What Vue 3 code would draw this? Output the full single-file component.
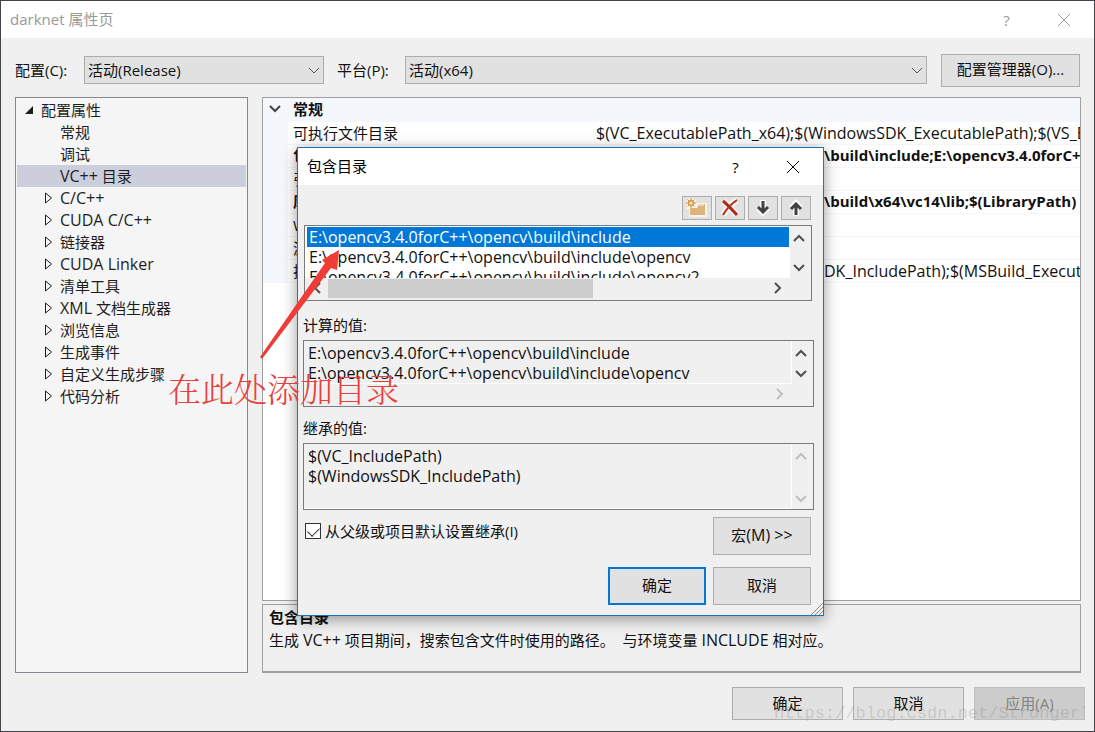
<script setup>
import { ref } from 'vue'

const configuration = ref('release')
const platform = ref('x64')
const inherit = ref(true)

const treeItems = [
  { label: '常规' },
  { label: '调试' },
  { latin: 'VC++', label: ' 目录', selected: true },
  { latin: 'C/C++', branch: true },
  { latin: 'CUDA C/C++', branch: true },
  { label: '链接器', branch: true },
  { latin: 'CUDA Linker', branch: true },
  { label: '清单工具', branch: true },
  { latin: 'XML', label: ' 文档生成器', branch: true },
  { label: '浏览信息', branch: true },
  { label: '生成事件', branch: true },
  { label: '自定义生成步骤', branch: true },
  { label: '代码分析', branch: true },
]

const properties = [
  { name: '可执行文件目录', value: '$(VC_ExecutablePath_x64);$(WindowsSDK_ExecutablePath);$(VS_ExecutablePath)' },
  { name: '包含目录', root: 'E:\\opencv3.4.0forC++\\opencv', value: '\\build\\include;E:\\opencv3.4.0forC++', bold: true },
  { name: '引用目录', value: '' },
  { name: '库目录', root: 'E:\\opencv3.4.0forC++\\opencv', value: '\\build\\x64\\vc14\\lib;$(LibraryPath)', bold: true },
  { name: 'WinRT 库目录', value: '' },
  { name: '源目录', value: '' },
  { name: '排除目录', root: '$(VC_IncludePath);$(WindowsS', value: 'DK_IncludePath);$(MSBuild_ExecutablePath)' },
]

const directories = [
  'E:\\opencv3.4.0forC++\\opencv\\build\\include',
  'E:\\opencv3.4.0forC++\\opencv\\build\\include\\opencv',
  'E:\\opencv3.4.0forC++\\opencv\\build\\include\\opencv2',
]
const evaluated = directories.slice(0, 2)
const inherited = ['$(VC_IncludePath)', '$(WindowsSDK_IncludePath)']
</script>

<template>
  <div class="window">
    <header class="titlebar">
      <span class="title">darknet 属性页</span>
      <button class="caption" aria-label="帮助">?</button>
      <button class="caption" aria-label="关闭">
        <svg width="14" height="14" viewBox="0 0 14 14"><path d="M1 1L13 13M13 1L1 13" /></svg>
      </button>
    </header>

    <div class="config">
      <label class="config-label" for="cfg">配置(C):</label>
      <span class="picker picker-cfg">
        <select id="cfg" v-model="configuration"><option value="release">活动(Release)</option></select>
        <svg class="drop" width="12" height="8" viewBox="0 0 12 8"><path d="M1 1L6 6L11 1" /></svg>
      </span>
      <label class="config-label platform" for="plat">平台(P):</label>
      <span class="picker picker-plat">
        <select id="plat" v-model="platform"><option value="x64">活动(x64)</option></select>
        <svg class="drop" width="12" height="8" viewBox="0 0 12 8"><path d="M1 1L6 6L11 1" /></svg>
      </span>
      <button class="push manager">配置管理器(O)...</button>
    </div>

    <main class="body">
      <nav class="tree">
        <div class="node root">
          <svg width="10" height="10" viewBox="0 0 10 10"><path class="solid" d="M9 1V9H1Z" /></svg>
          <span>配置属性</span>
        </div>
        <div v-for="(item, i) in treeItems" :key="i" class="node" :class="{ selected: item.selected }">
          <span class="twist">
            <svg v-if="item.branch" width="9" height="12" viewBox="0 0 9 12"><path class="hollow" d="M1.500 1L7.500 6L1.500 11Z" /></svg>
          </span>
          <span><span v-if="item.latin" class="latin">{{ item.latin }}</span>{{ item.label }}</span>
        </div>
      </nav>

      <section class="details">
        <div class="sheet">
          <div class="category">
            <svg width="12" height="8" viewBox="0 0 12 8"><path d="M1 1L6 6L11 1" /></svg>
            <span>常规</span>
          </div>
          <div v-for="row in properties" :key="row.name" class="prop" :class="{ bold: row.bold }">
            <span class="prop-name">{{ row.name }}</span>
            <span class="prop-value"><span v-if="row.root" class="prop-root">{{ row.root }}</span>{{ row.value }}</span>
          </div>
        </div>
        <div class="description">
          <strong>包含目录</strong>
          <p>生成 <span class="latin">VC++</span> 项目期间，搜索包含文件时使用的路径。&nbsp; 与环境变量 <span class="latin">INCLUDE</span> 相对应。</p>
        </div>
      </section>
    </main>

    <footer class="actions">
      <button class="push">确定</button>
      <button class="push">取消</button>
      <button class="push" disabled>应用(A)</button>
    </footer>

    <section class="dialog" role="dialog" aria-labelledby="dialog-title">
      <header class="dialog-title">
        <span id="dialog-title" class="title">包含目录</span>
        <button class="caption" aria-label="帮助">?</button>
        <button class="caption" aria-label="关闭">
          <svg width="14" height="14" viewBox="0 0 14 14"><path d="M1 1L13 13M13 1L1 13" /></svg>
        </button>
      </header>
      <div class="dialog-body">
        <div class="toolbar">
          <button aria-label="新行">
            <svg width="24" height="22" viewBox="0 0 24 22">
              <path d="M2 2H11V6H22V20H4V12H1Z" fill="#f8f5ee" />
              <path d="M5 11H12L14 7H20V18H5Z" fill="#dfb47a" />
              <path d="M14 8H19" stroke="#fff5df" />
              <circle cx="6" cy="6" r="5" fill="#f8f0df" />
              <path d="M6 1V11M1 6H11M2.500 2.500L9.500 9.500M9.500 2.500L2.500 9.500" stroke="#c98a35" />
              <circle cx="6" cy="6" r="3" fill="#d9963f" />
              <circle cx="6" cy="6" r="1.500" fill="#fff0b8" />
            </svg>
          </button>
          <button aria-label="删除">
            <svg width="24" height="22" viewBox="0 0 24 22">
              <path d="M5 4Q9 7 19 18M19 3Q11 9 5 18" fill="none" stroke="#f8f5f3" stroke-width="6" />
              <path d="M5 4Q9 7 19 18" fill="none" stroke="#a92d18" stroke-width="3" />
              <path d="M19 3Q10 9 5 18" fill="none" stroke="#b92d14" stroke-width="2" />
            </svg>
          </button>
          <button aria-label="下移">
            <svg width="24" height="22" viewBox="0 0 24 22">
              <path d="M12 3V17M7 11L12 16L17 11" fill="none" stroke="#f7f7f7" stroke-width="6" />
              <path d="M12 4V16M7 10L12 15L17 10" fill="none" stroke="#424242" stroke-width="3" />
            </svg>
          </button>
          <button aria-label="上移">
            <svg width="24" height="22" viewBox="0 0 24 22">
              <path d="M12 19V6M7 11L12 6L17 11" fill="none" stroke="#f7f7f7" stroke-width="6" />
              <path d="M12 18V6M7 12L12 7L17 12" fill="none" stroke="#424242" stroke-width="3" />
            </svg>
          </button>
        </div>

        <div class="list editable">
          <ul>
            <li v-for="(dir, i) in directories" :key="dir" :class="{ chosen: i === 0 }">{{ dir }}</li>
          </ul>
          <div class="vbar">
            <svg width="12" height="8" viewBox="0 0 12 8"><path d="M1 7L6 2L11 7" /></svg>
            <svg width="12" height="8" viewBox="0 0 12 8"><path d="M1 1L6 6L11 1" /></svg>
          </div>
          <div class="hbar">
            <svg width="8" height="12" viewBox="0 0 8 12"><path d="M7 1L2 6L7 11" /></svg>
            <span class="track"><span class="thumb"></span></span>
            <svg width="8" height="12" viewBox="0 0 8 12"><path d="M1 1L6 6L1 11" /></svg>
          </div>
        </div>

        <h2>计算的值:</h2>
        <div class="list readonly">
          <ul><li v-for="dir in evaluated" :key="dir">{{ dir }}</li></ul>
          <div class="vbar">
            <svg width="12" height="8" viewBox="0 0 12 8"><path d="M1 7L6 2L11 7" /></svg>
            <svg width="12" height="8" viewBox="0 0 12 8"><path d="M1 1L6 6L11 1" /></svg>
          </div>
          <div class="hbar faint">
            <span class="track"></span>
            <svg width="8" height="12" viewBox="0 0 8 12"><path d="M1 1L6 6L1 11" /></svg>
          </div>
        </div>

        <h2>继承的值:</h2>
        <div class="list readonly tall">
          <ul><li v-for="dir in inherited" :key="dir">{{ dir }}</li></ul>
          <div class="vbar faint">
            <svg width="12" height="8" viewBox="0 0 12 8"><path d="M1 7L6 2L11 7" /></svg>
            <svg width="12" height="8" viewBox="0 0 12 8"><path d="M1 1L6 6L11 1" /></svg>
          </div>
        </div>

        <div class="options">
          <label class="inherit"><input v-model="inherit" type="checkbox" /><span>从父级或项目默认设置继承(I)</span></label>
          <button class="push">宏<span class="latin">(M) &gt;&gt;</span></button>
        </div>
        <div class="confirm">
          <button class="push primary">确定</button>
          <button class="push">取消</button>
        </div>
      </div>
      <svg class="grip" width="12" height="12" viewBox="0 0 12 12"><path d="M0 12L12 0M4 12L12 4M8 12L12 8" /></svg>
    </section>

    <svg class="arrow" width="80" height="110" viewBox="0 0 80 110"><path d="M79 0L62 10L65 13L0 107L2 109L71 18L77 20Z" /></svg>
    <p class="note">在此处添加目录</p>
    <p class="watermark">https://blog.csdn.net/Strongerl</p>
  </div>
</template>

<style>
body {
  background: #f0f0f0;
}
</style>

<style scoped>
* {
  box-sizing: border-box;
}

.window {
  position: relative;
  display: flex;
  flex-direction: column;
  min-height: 100vh;
  overflow: hidden;
  border: 1px solid #454347;
  background: #f0f0f0;
  color: #111;
  font: 15px/22px "Open Sans", "Noto Sans CJK SC", sans-serif;
}

button,
select,
input {
  margin: 0;
  font: inherit;
  color: inherit;
}

svg {
  flex: none;
  display: block;
}

p,
h2,
ul {
  margin: 0;
  padding: 0;
  list-style: none;
}

.latin {
  font-size: 16px;
}

.titlebar,
.dialog-title {
  display: flex;
  align-items: center;
  height: 37px;
  padding: 0 2px 0 9px;
  background: #fff;
}

.titlebar {
  color: #999;
}

.title {
  flex: 1;
  padding-bottom: 2px;
}

.caption {
  display: flex;
  align-items: center;
  justify-content: center;
  width: 57px;
  height: 30px;
  padding: 0;
  border: 0;
  background: none;
}

.caption path {
  fill: none;
  stroke: currentColor;
}

.config {
  display: flex;
  align-items: center;
  height: 59px;
  padding: 5px 14px 0;
}

.config-label {
  width: 69px;
}

.platform {
  width: 68px;
  margin-left: 13px;
}

.picker {
  position: relative;
  display: flex;
  height: 28px;
}

.picker-cfg {
  width: 240px;
}

.picker-plat {
  flex: 1;
}

.picker select {
  width: 100%;
  padding: 0 24px 0 3px;
  border: 1px solid #adadad;
  border-radius: 0;
  background: #e1e1e1;
  appearance: none;
}

.drop {
  position: absolute;
  top: 11px;
  right: 4px;
  pointer-events: none;
}

.drop path {
  fill: none;
  stroke: #555;
}

.push {
  height: 38px;
  padding: 0;
  border: 1px solid #adadad;
  background: #e1e1e1;
}

.manager {
  width: 139px;
  height: 33px;
  margin-left: 14px;
}

.body {
  flex: 1;
  display: flex;
  gap: 14px;
  padding: 0 13px 0 14px;
}

.tree {
  width: 233px;
  padding: 1px;
  border: 1px solid #828790;
  background: #f5f5f5;
  color: #1e1e1e;
}

.node {
  display: flex;
  align-items: center;
  height: 22px;
}

.root {
  gap: 7px;
  padding-left: 7px;
}

.twist {
  width: 43px;
  padding-left: 27px;
}

.selected {
  background: #cccedb;
}

.solid {
  fill: #1e1e1e;
}

.hollow {
  fill: none;
  stroke: #1e1e1e;
}

.details {
  flex: 1;
  min-width: 0;
  display: flex;
  flex-direction: column;
  gap: 3px;
}

.sheet {
  flex: 1;
  overflow: hidden;
  border: 1px solid #a0a0a0;
  background: #fff;
}

.category {
  display: flex;
  align-items: center;
  gap: 12px;
  height: 24px;
  padding: 0 0 2px 6px;
  background: #f4f7fc;
  font-weight: 700;
}

.category path {
  fill: none;
  stroke: #444;
  stroke-width: 2;
}

.prop {
  display: flex;
  height: 23px;
  border-left: 25px solid #f4f7fc;
  border-bottom: 1px solid #f6f6f8;
  white-space: nowrap;
}

.prop-name {
  flex: none;
  width: 308px;
  padding-left: 5px;
}

.prop-value {
  display: flex;
  font-size: 16px;
}

.prop-root {
  display: flex;
  flex: none;
  justify-content: flex-end;
  width: 228px;
  overflow: hidden;
}

.bold {
  font-weight: 700;
  line-height: 20px;
}

.bold .prop-value {
  font-size: 15px;
}

.description {
  height: 69px;
  padding: 1px 6px;
  border: 1px solid #a0a0a0;
  border-bottom-width: 2px;
}

.description strong {
  display: block;
  height: 23px;
}

.actions {
  display: flex;
  justify-content: flex-end;
  gap: 10px;
  padding: 14px 9px 11px;
}

.actions .push {
  width: 111px;
  height: 33px;
}

.push {
  padding-bottom: 2px;
}

.actions .push:disabled {
  border-color: #bfbfbf;
  background: #ccc;
  color: #838383;
}

.dialog {
  position: absolute;
  top: 146px;
  left: 296px;
  width: 527px;
  border: 1px solid #1c76b5;
  background: #f0f0f0;
  box-shadow: 0 3px 14px rgba(0, 0, 0, 0.4);
}

.dialog-title {
  color: #000;
}

.dialog-body {
  padding: 11px 9px 10px 5px;
}

.toolbar {
  display: flex;
  justify-content: flex-end;
  gap: 3px;
  padding-right: 3px;
}

.toolbar button {
  display: flex;
  align-items: center;
  justify-content: center;
  width: 30px;
  height: 24px;
  padding: 0;
  border: 1px solid #adadad;
  background: #e1e1e1;
}

.list {
  display: grid;
  grid-template-columns: 1fr 21px;
  border: 1px solid #7a7a7a;
  font-size: 16px;
}

.list ul {
  overflow: hidden;
  white-space: nowrap;
}

.list li {
  height: 20px;
  padding-left: 4px;
  line-height: 20px;
}

.editable {
  grid-template-rows: 52px 22px;
  margin: 5px 2px 0 1px;
}

.editable ul {
  padding: 1px 1px 0 2px;
  background: #fff;
}

.editable li {
  padding-left: 2px;
}

.editable .chosen {
  background: #0078d7;
  color: #fff;
}

.readonly {
  grid-template-rows: 43px 22px;
}

.readonly ul {
  padding-top: 2px;
  border-right: 1px solid #fff;
  border-bottom: 1px solid #fff;
}

.tall {
  grid-template-rows: 65px;
  margin-bottom: 7px;
}

.vbar {
  display: flex;
  flex-direction: column;
  align-items: center;
  justify-content: space-between;
  padding: 8px 3px 6px 0;
}

.hbar {
  display: flex;
  align-items: center;
  padding: 0 8px 2px;
}

.vbar path,
.hbar path {
  fill: none;
  stroke: #505050;
  stroke-width: 2;
}

.faint path {
  stroke: #bfbfbf;
}

.track {
  flex: 1;
  margin: 0 0 0 7px;
}

.editable .track {
  margin-right: 181px;
}

.thumb {
  display: block;
  height: 19px;
  background: #cdcdcd;
}

h2 {
  height: 39px;
  padding-top: 13px;
  font-size: 15px;
  font-weight: 400;
}

.readonly + h2 {
  height: 36px;
  padding-top: 10px;
}

.options,
.confirm {
  display: flex;
  align-items: flex-start;
  padding-right: 3px;
}

.options {
  justify-content: space-between;
  margin-bottom: 12px;
}

.confirm {
  justify-content: flex-end;
  gap: 7px;
}

.dialog .push {
  width: 98px;
}

.dialog .primary {
  border: 2px solid #0078d7;
}

.inherit {
  display: flex;
  align-items: center;
  gap: 4px;
  padding: 3px 0 0 2px;
}

.inherit input {
  width: 16px;
  height: 16px;
  border: 1px solid #333;
  background: #fff;
  appearance: none;
}

.inherit input:checked::before {
  content: "";
  display: block;
  width: 10px;
  height: 6px;
  margin: 3px 2px;
  border-bottom: 1px solid #222;
  border-left: 1px solid #222;
  transform: rotate(-45deg);
}

.grip {
  position: absolute;
  right: 0;
  bottom: 0;
}

.grip path {
  stroke: #8a8a8a;
}

.arrow {
  position: absolute;
  top: 249px;
  left: 259px;
}

.arrow path {
  fill: #f03c37;
}

.note {
  position: absolute;
  top: 365px;
  left: 167px;
  color: #e8403c;
  font: 300 33px/44px "Noto Serif CJK SC", "Noto Sans CJK SC", serif;
}

.watermark {
  position: absolute;
  top: 702px;
  left: 773px;
  right: 9px;
  overflow: hidden;
  color: rgba(120, 120, 120, 0.25);
  font: 17px/22px "Liberation Mono", monospace;
  white-space: nowrap;
  pointer-events: none;
}
</style>
